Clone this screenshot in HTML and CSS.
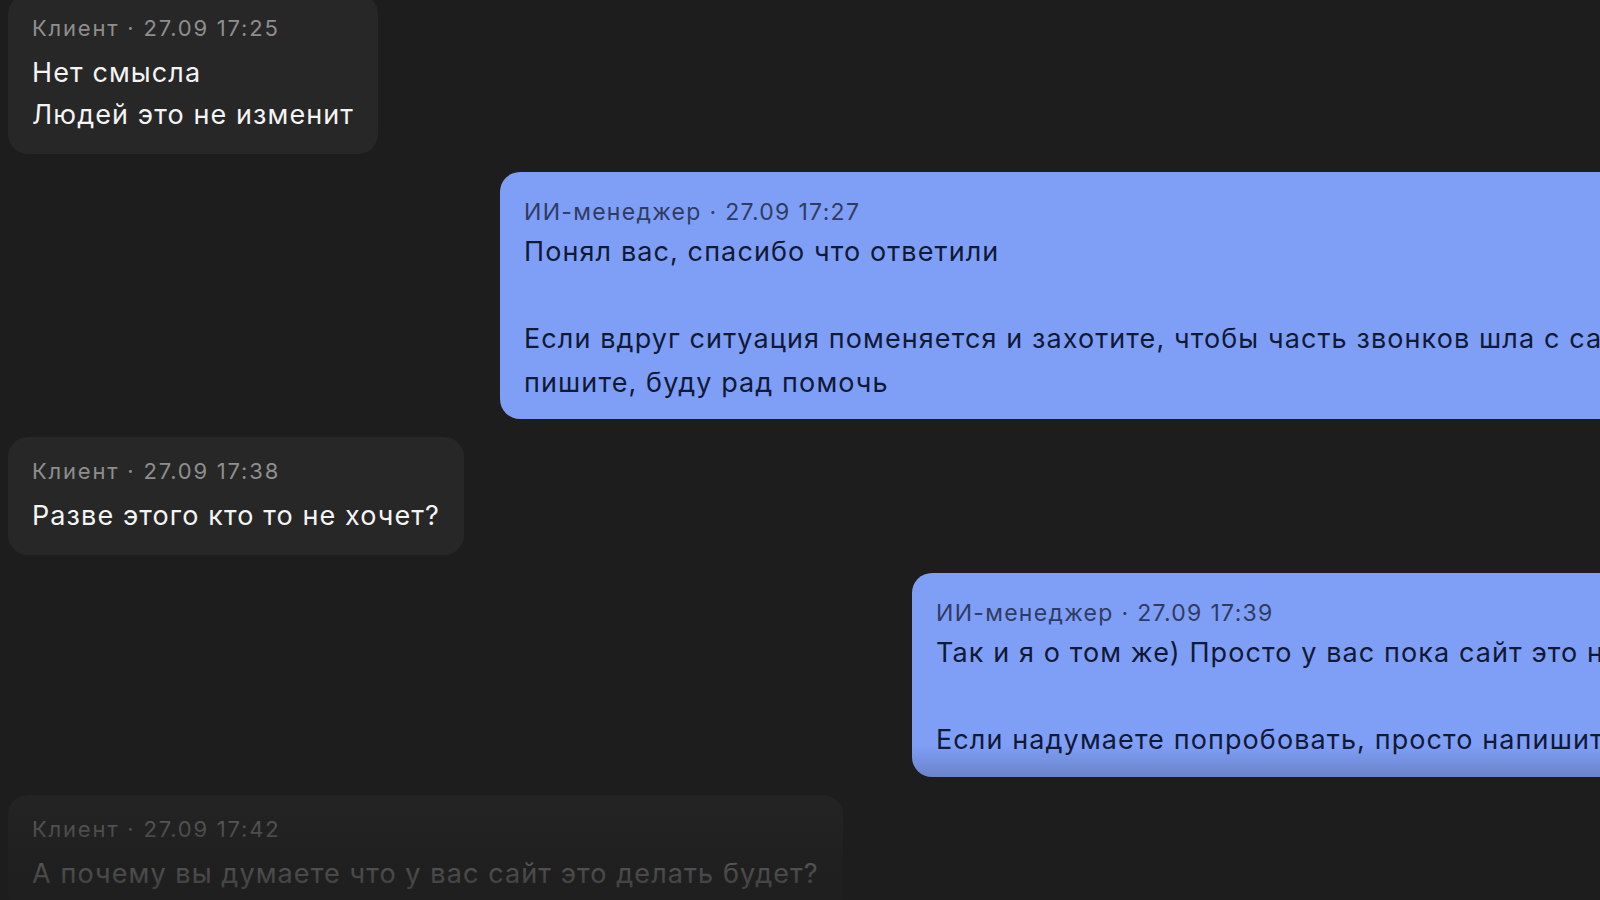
FILE: index.html
```html
<!DOCTYPE html>
<html lang="ru">
<head>
<meta charset="utf-8">
<title>Чат</title>
<link rel="stylesheet" href="styles.css">
</head>
<body>
<div class="chat">
  <div class="msg msg-in msg-first">
    <div class="meta">Клиент · 27.09 17:25</div>
    <div class="text">Нет смысла<br>Людей это не изменит</div>
  </div>
  <div class="msg msg-out out-wide">
    <div class="meta">ИИ-менеджер · 27.09 17:27</div>
    <div class="text">Понял вас, спасибо что ответили<br><br>Если вдруг ситуация поменяется и захотите, чтобы часть звонков шла с сайта,<br>пишите, буду рад помочь</div>
  </div>
  <div class="msg msg-in">
    <div class="meta">Клиент · 27.09 17:38</div>
    <div class="text">Разве этого кто то не хочет?</div>
  </div>
  <div class="msg msg-out out-narrow">
    <div class="meta">ИИ-менеджер · 27.09 17:39</div>
    <div class="text">Так и я о том же) Просто у вас пока сайт это не делает<br><br>Если надумаете попробовать, просто напишите</div>
  </div>
  <div class="msg msg-in">
    <div class="meta">Клиент · 27.09 17:42</div>
    <div class="text">А почему вы думаете что у вас сайт это делать будет?</div>
  </div>
  <div class="fade"></div>
</div>
</body>
</html>
```

FILE: styles.css
```css
html, body {
  margin: 0;
  padding: 0;
  background: #1d1d1d;
  overflow: hidden;
  width: 1600px;
  height: 900px;
}

.chat {
  position: relative;
  display: flex;
  flex-direction: column;
  align-items: flex-start;
  gap: 18px;
  padding: 0 0 0 8px;
  width: 2600px;
  height: 900px;
  font-family: Inter, "Noto Sans", "Liberation Sans", sans-serif;
  -webkit-font-smoothing: antialiased;
}

.msg {
  border-radius: 20px;
  white-space: nowrap;
  flex: none;
}

.msg-first {
  margin-top: -6px;
}

.msg-in {
  background: #272727;
  padding: 20px 24px 18px 24px;
}

.msg-in .meta {
  font-size: 22px;
  line-height: 28px;
  letter-spacing: 1.8px;
  color: #8e8e8e;
}

.msg-in .text {
  margin-top: 10px;
  font-size: 27px;
  line-height: 42px;
  letter-spacing: 1.1px;
  color: #f4f4f4;
}

.msg-out {
  background: #7f9ff7;
  padding: 24px 24px 15px 24px;
}

.msg-out .meta {
  font-size: 23px;
  line-height: 32px;
  letter-spacing: 1.3px;
  color: #2f3b63;
}

.msg-out .text {
  margin-top: 2px;
  font-size: 27px;
  line-height: 43.5px;
  letter-spacing: 1.1px;
  color: #101936;
}

.out-wide {
  margin-left: 492px;
}

.out-narrow {
  margin-left: 904px;
}

.fade {
  position: absolute;
  left: 0;
  right: 0;
  top: 745px;
  height: 155px;
  background: linear-gradient(to bottom, rgba(29,29,29,0) 0%, rgba(29,29,29,0.58) 56%, rgba(29,29,29,0.8) 84%, rgba(29,29,29,0.85) 100%);
  pointer-events: none;
}
```
